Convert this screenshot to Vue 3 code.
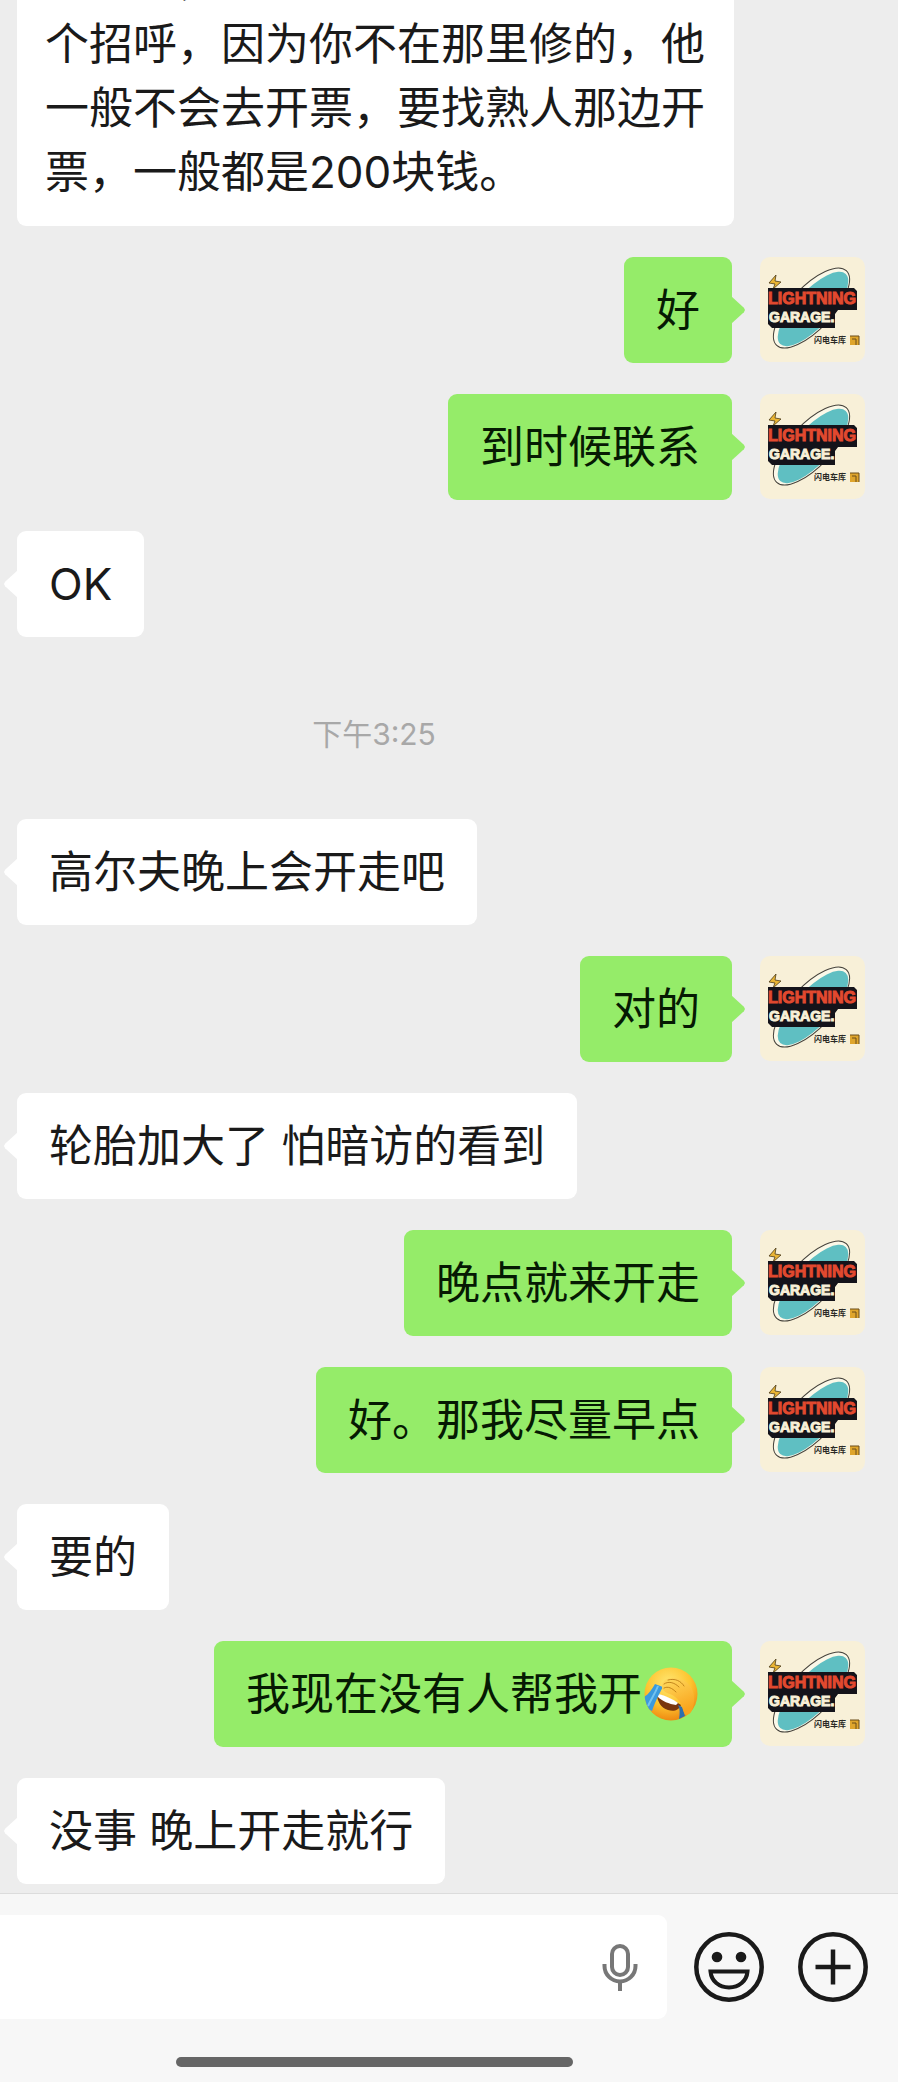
<script setup>
import { ref } from 'vue'

const draft = ref('')

const messages = ref([
  {
    id: 1,
    from: 'them',
    long: true,
    text: '　　　，\n个招呼，因为你不在那里修的，他一般不会去开票，要找熟人那边开票，一般都是200块钱。'
  },
  { id: 2, from: 'me', text: '好' },
  { id: 3, from: 'me', text: '到时候联系' },
  { id: 4, from: 'them', text: 'OK' },
  { id: 5, from: 'time', text: '下午3:25' },
  { id: 6, from: 'them', text: '高尔夫晚上会开走吧' },
  { id: 7, from: 'me', text: '对的' },
  { id: 8, from: 'them', text: '轮胎加大了 怕暗访的看到' },
  { id: 9, from: 'me', text: '晚点就来开走' },
  { id: 10, from: 'me', text: '好。那我尽量早点' },
  { id: 11, from: 'them', text: '要的' },
  { id: 12, from: 'me', text: '我现在没有人帮我开', emoji: true },
  { id: 13, from: 'them', text: '没事 晚上开走就行' }
])
</script>

<template>
  <div class="chat-page" lang="zh-CN">
    <main class="messages">
      <div v-for="msg in messages" :key="msg.id" class="row" :class="msg.from">
        <time v-if="msg.from === 'time'" class="time-label">{{ msg.text }}</time>

        <template v-else>
          <div class="bubble" :class="{ long: msg.long }">
            <span class="bubble-text">{{ msg.text }}</span>
            <svg v-if="msg.emoji" class="emoji" viewBox="0 0 54 54">
              <defs>
                <radialGradient id="face" cx="0.45" cy="0.3" r="0.7">
                  <stop offset="0" stop-color="#ffe773" />
                  <stop offset="0.6" stop-color="#fdc42f" />
                  <stop offset="1" stop-color="#ee8a12" />
                </radialGradient>
                <linearGradient id="hand" x1="0" y1="0" x2="0.4" y2="1">
                  <stop offset="0" stop-color="#ffdc62" />
                  <stop offset="1" stop-color="#f9a51d" />
                </linearGradient>
                <clipPath id="head"><circle cx="27" cy="27" r="26.5" /></clipPath>
              </defs>
              <circle cx="27" cy="27" r="26.5" fill="url(#face)" />
              <g clip-path="url(#head)">
                <path d="M13 27C20 29 30 33 37 38C35 43 30 45 24 43C17 41 13 34 13 27Z" fill="#7a360d" />
                <path d="M14 27C20 28 29 32 34 36L32 38C25 37 18 34 14 30Z" fill="#fff" />
                <path d="M11 17L19 20C15 27 12 33 8 44L0 40V30C5 27 8 22 11 17Z" fill="#3b9ade" />
                <path d="M14 19C11 27 7 32 4 39" stroke="#74c3f0" stroke-width="2" fill="none" />
                <path d="M34 38L38 40L41 49L35 52C36 46 36 42 34 38Z" fill="#2c6fae" />
              </g>
              <path d="M18 18C19 12 26 10 33 11C43 13 50 21 50 31C50 40 48 47 43 48C39 48 40 41 37 37C35 33 31 29 26 27C21 26 17 22 18 18Z" fill="url(#hand)" />
              <path d="M20 17C24 14 30 15 35 20M20 21C24 19 28 21 32 25M24 13C31 11 37 14 40 19" fill="none" stroke="#b4730f" stroke-width="0.8" stroke-linecap="round" />
            </svg>
          </div>

          <svg v-if="msg.from === 'me'" class="avatar" viewBox="0 0 105 105">
            <rect width="105" height="105" rx="10" fill="#f8f0d8" />
            <ellipse cx="51.5" cy="51" rx="51" ry="21" transform="rotate(-47 51.5 51)" fill="#fbf8e8" stroke="#45423b" />
            <ellipse cx="53" cy="52" rx="48" ry="18" transform="rotate(-47 53 52)" fill="#5fbfc2" />
            <path d="M16 18l-7 8l6 1l-2 5l8-7l-6-1z" fill="#e9b434" stroke="#4a3a18" stroke-width="0.8" />
            <path d="M8 31H94l3 3V53H78l-3 4v14H12l-4-4z" fill="#14131a" />
            <text x="8" y="47" class="logo-top">LIGHTNING</text>
            <text x="9" y="65" class="logo-bottom">GARAGE.</text>
            <text x="54" y="86" class="logo-sub">闪电车库</text>
            <path d="M90 79h9v9h-9z" fill="#dfa52c" />
            <path d="M90 79h9v9M92 82h4v6" fill="none" stroke="#6b4c19" />
          </svg>
        </template>
      </div>
    </main>

    <footer class="composer">
      <div class="composer-row">
        <div class="field">
          <input v-model="draft" type="text" class="field-input" aria-label="消息" />
          <button type="button" class="mic-btn" aria-label="语音">
            <svg class="mic-icon" viewBox="0 0 36 48" fill="none" stroke="#777" stroke-width="4">
              <rect x="10" y="3" width="16" height="29" rx="8" />
              <path d="M2.5 21v2a15.5 15.5 0 0 0 31 0v-2M18 39v9" />
            </svg>
          </button>
        </div>

        <button type="button" class="icon-btn" aria-label="表情">
          <svg class="icon" viewBox="0 0 70 70" fill="none" stroke="#1a1a1a" stroke-width="4.5">
            <circle cx="35" cy="35" r="32.7" />
            <circle cx="23" cy="25" r="5.3" fill="#1a1a1a" stroke="none" />
            <circle cx="47" cy="25" r="5.3" fill="#1a1a1a" stroke="none" />
            <path d="M16.5 39.5h37c-.8 9.500-8.500 16-18.500 16s-17.700-6.500-18.500-16z" stroke-width="4" />
          </svg>
        </button>
        <button type="button" class="icon-btn" aria-label="更多">
          <svg class="icon" viewBox="0 0 70 70" fill="none" stroke="#1a1a1a" stroke-width="4.5">
            <circle cx="35" cy="35" r="32.7" />
            <path d="M35 17.5v35M17.5 35h35" />
          </svg>
        </button>
      </div>
      <div class="home-bar"></div>
    </footer>
  </div>
</template>

<style>
body {
  background: #ededed;
}
</style>

<style scoped>
.chat-page {
  background: #ededed;
  font-family: Inter, "Noto Sans CJK SC", sans-serif;
  color: #1a1a1a;
  overflow: hidden;
}

.messages {
  display: flex;
  flex-direction: column;
  gap: 31px;
  padding: 0 33px 9px 17px;
}

.row {
  display: flex;
  align-items: flex-start;
}

.row.me {
  justify-content: flex-end;
  gap: 28px;
}

.row.time {
  justify-content: center;
  padding: 44px 134px 32px 0;
}

.time-label {
  font-size: 30px;
  line-height: 44px;
  color: #a8a8a8;
}

.bubble {
  position: relative;
  display: flex;
  align-items: center;
  box-sizing: border-box;
  min-height: 106px;
  padding: 21px 32px;
  border-radius: 9px;
  background: #fff;
  font-size: 44px;
  line-height: 64px;
}

.bubble-text {
  white-space: pre-wrap;
}

.me .bubble {
  background: #95ec69;
  color: #061a03;
}

/* little tail pointing at the avatar */
.bubble::after {
  content: '';
  position: absolute;
  top: 39px;
  left: -13px;
  width: 14px;
  height: 28px;
  background: inherit;
  clip-path: polygon(100% 0, 8% 42%, 0 50%, 8% 58%, 100% 100%);
}

.me .bubble::after {
  left: auto;
  right: -13px;
  clip-path: polygon(0 0, 92% 42%, 100% 50%, 92% 58%, 0 100%);
}

/* scrolled partly out of view */
.bubble.long {
  max-width: 717px;
  margin-top: -52px;
  padding: 0 28px 22px;
}

.bubble.long::after {
  display: none;
}

.emoji {
  flex: none;
  width: 54px;
  height: 54px;
  margin: 0 2px;
}

.avatar {
  flex: none;
  width: 105px;
  height: 105px;
}

.logo-top,
.logo-bottom {
  font-family: "Liberation Sans", sans-serif;
  font-weight: 700;
}

.logo-top {
  font-size: 16px;
  fill: #e2492f;
  stroke: #e2492f;
  stroke-width: 1px;
}

.logo-bottom {
  font-size: 14px;
  fill: #f8f0d8;
  stroke: #f8f0d8;
  stroke-width: 1px;
}

.logo-sub {
  font-size: 8px;
  font-weight: 700;
  fill: #2b2a26;
}

.composer {
  padding: 21px 30px 15px 0;
  border-top: 1px solid #dcdcdc;
  background: #f7f7f7;
}

.composer-row {
  display: grid;
  grid-template-columns: 1fr 77px 70px;
  align-items: center;
  gap: 27px;
}

.field {
  display: flex;
  align-items: center;
  min-width: 0;
  height: 104px;
  padding-right: 29px;
  border-radius: 0 9px 9px 0;
  background: #fff;
}

.field-input {
  flex: 1;
  min-width: 0;
  height: 100%;
  padding: 0 32px;
  border: none;
  outline: none;
  background: transparent;
  font: inherit;
  font-size: 44px;
}

.mic-btn,
.icon-btn {
  display: flex;
  flex: none;
  padding: 0;
  border: none;
  background: none;
  cursor: pointer;
}

.mic-icon {
  width: 36px;
  height: 48px;
}

.icon {
  width: 70px;
  height: 70px;
}

.home-bar {
  width: 397px;
  height: 10px;
  margin: 38px auto 0 176px;
  border-radius: 5px;
  background: #666;
}
</style>
